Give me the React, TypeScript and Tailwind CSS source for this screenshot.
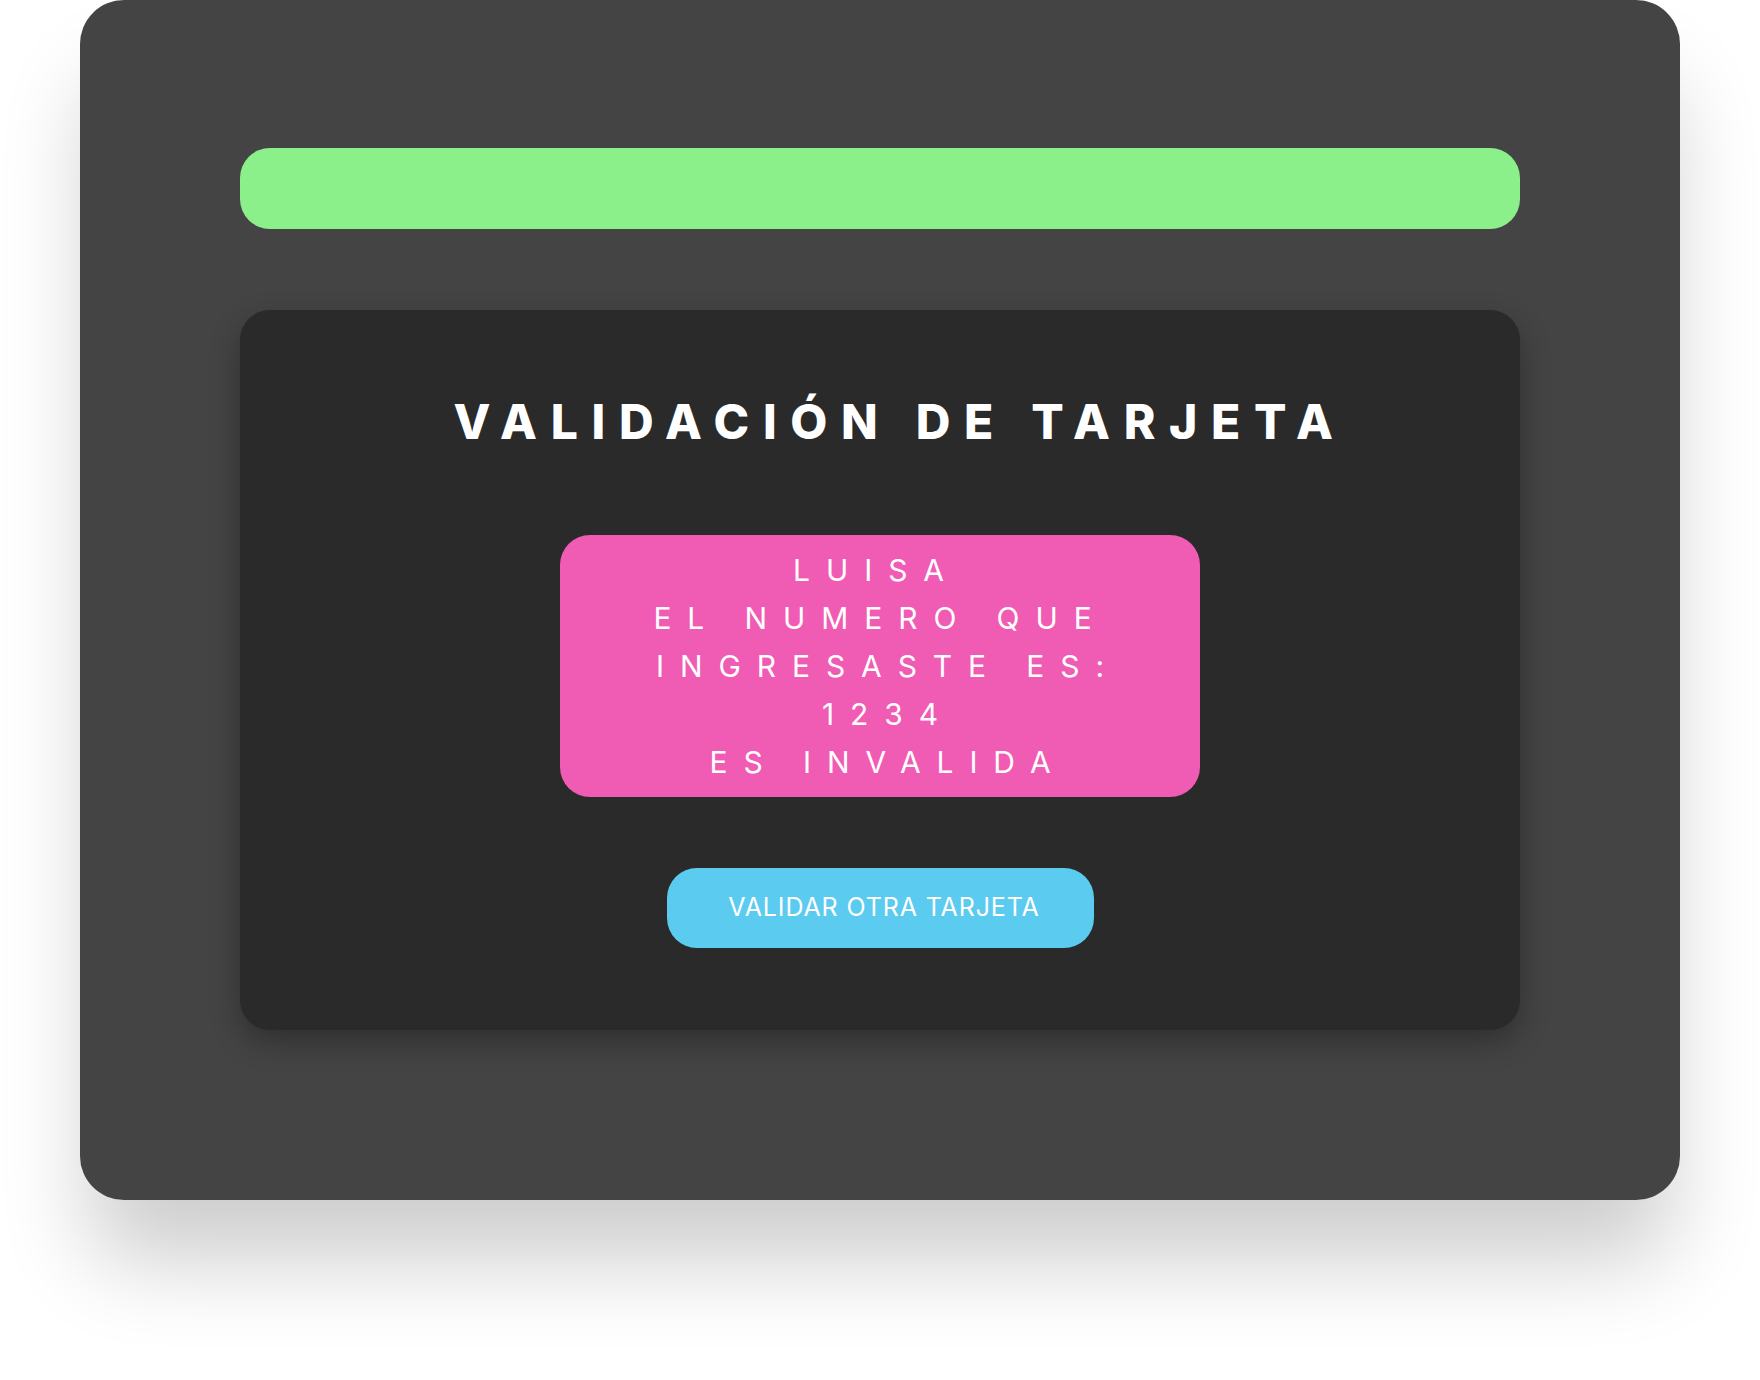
import React from "react";

export default function App() {
  const lines: { t: string; cls: string }[] = [
    { t: "LUISA", cls: "pl-[15px] pr-[22px]" },
    { t: "EL NUMERO QUE", cls: "pl-[15px] pr-[14px]" },
    { t: "INGRESASTE ES:", cls: "pl-[16px]" },
    { t: "1234", cls: "pl-[16px]" },
    { t: "ES INVALIDA", cls: "pl-[16px]" },
  ];
  return (
    <div className="min-h-[1380px] w-full bg-white" style={{ fontFamily: "Inter, 'Noto Sans', sans-serif" }}>
      <div className="mx-auto flex h-[1200px] w-[1600px] flex-col items-center rounded-[44px] bg-[#444444] pt-[148px] shadow-[0_70px_90px_-10px_rgba(0,0,0,0.2)]">
        <div className="h-[81px] w-[1280px] rounded-[30px] bg-[#8bf08a]" />
        <div className="mt-[81px] flex h-[720px] w-[1280px] flex-col items-center rounded-[30px] bg-[#2a2a2a] pt-[88px] shadow-[0_12px_30px_rgba(0,0,0,0.3)]">
          <h1 className="pl-[40px] text-[48px] font-extrabold leading-[48px] tracking-[0.285em] text-white">
            VALIDACIÓN DE TARJETA
          </h1>
          <div className="mt-[89px] flex w-[640px] flex-col items-center rounded-[30px] bg-[#f05bb4] py-[11px]">
            {lines.map((l) => (
              <div key={l.t} className={`${l.cls} text-[30px] font-normal leading-[48px] tracking-[0.53em] text-white`}>
                {l.t}
              </div>
            ))}
          </div>
          <button className="mt-[71px] flex h-[80px] w-[427px] items-center justify-center rounded-[30px] bg-[#5bcbf0] pl-[8px] text-[25px] font-normal tracking-[0.035em] text-white">
            VALIDAR OTRA TARJETA
          </button>
        </div>
      </div>
    </div>
  );
}
